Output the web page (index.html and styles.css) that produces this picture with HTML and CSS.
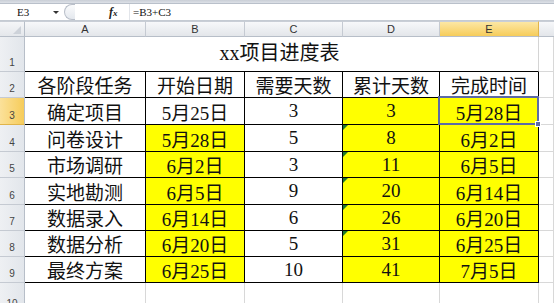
FILE: index.html
```html
<!DOCTYPE html>
<html>
<head>
<meta charset="utf-8">
<link rel="stylesheet" href="styles.css">
</head>
<body>
<div class="app">
  <div class="topstrip"></div>
  <div class="fbar">
    <div class="namebox"><span class="ref">E3</span><span class="arrow"></span></div>
    <div class="knob"></div>
    <div class="fx">f<span>x</span></div>
    <div class="formula">=B3+C3</div>
  </div>
  <div class="sheet">
    <div class="corner"><span class="tri"></span></div>
    <div class="ch">A</div>
    <div class="ch">B</div>
    <div class="ch">C</div>
    <div class="ch">D</div>
    <div class="ch sel">E</div>
    <div class="ch rest"></div>

    <div class="rh">1</div>
    <div class="title">xx项目进度表</div>
    <div class="c"></div>

    <div class="rh">2</div>
    <div class="c b">各阶段任务</div>
    <div class="c b">开始日期</div>
    <div class="c b">需要天数</div>
    <div class="c b">累计天数</div>
    <div class="c b">完成时间</div>
    <div class="c"></div>

    <div class="rh sel">3</div>
    <div class="c b">确定项目</div>
    <div class="c b">5月25日</div>
    <div class="c b">3</div>
    <div class="c b y">3</div>
    <div class="c b y active">5月28日</div>
    <div class="c"></div>

    <div class="rh">4</div>
    <div class="c b">问卷设计</div>
    <div class="c b y">5月28日</div>
    <div class="c b">5</div>
    <div class="c b y g">8</div>
    <div class="c b y">6月2日</div>
    <div class="c"></div>

    <div class="rh">5</div>
    <div class="c b">市场调研</div>
    <div class="c b y">6月2日</div>
    <div class="c b">3</div>
    <div class="c b y g">11</div>
    <div class="c b y">6月5日</div>
    <div class="c"></div>

    <div class="rh">6</div>
    <div class="c b">实地勘测</div>
    <div class="c b y">6月5日</div>
    <div class="c b">9</div>
    <div class="c b y g">20</div>
    <div class="c b y">6月14日</div>
    <div class="c"></div>

    <div class="rh">7</div>
    <div class="c b">数据录入</div>
    <div class="c b y">6月14日</div>
    <div class="c b">6</div>
    <div class="c b y g">26</div>
    <div class="c b y">6月20日</div>
    <div class="c"></div>

    <div class="rh">8</div>
    <div class="c b">数据分析</div>
    <div class="c b y">6月20日</div>
    <div class="c b">5</div>
    <div class="c b y g">31</div>
    <div class="c b y">6月25日</div>
    <div class="c"></div>

    <div class="rh">9</div>
    <div class="c b">最终方案</div>
    <div class="c b y">6月25日</div>
    <div class="c b">10</div>
    <div class="c b y">41</div>
    <div class="c b y">7月5日</div>
    <div class="c"></div>

    <div class="rh">10</div>
    <div class="c"></div>
    <div class="c"></div>
    <div class="c"></div>
    <div class="c"></div>
    <div class="c"></div>
    <div class="c"></div>
  </div>
</div>
</body>
</html>
```

FILE: styles.css
```css
html, body {
  margin: 0;
  padding: 0;
  background: #fff;
  overflow: hidden;
}
.app {
  width: 554px;
  height: 303px;
  overflow: hidden;
  font-family: "Liberation Serif", "Noto Sans CJK SC", serif;
}
.topstrip {
  height: 3px;
  background: linear-gradient(#c9ced6, #dde1e7);
  border-bottom: 1px solid #b9c0ca;
}
.fbar {
  height: 16px;
  display: flex;
  align-items: center;
  background: #fff;
  border-bottom: 1px solid #c5cbd3;
  font-size: 11px;
  color: #111;
}
.namebox {
  width: 62px;
  display: flex;
  align-items: center;
  position: relative;
}
.ref {
  margin-left: 17px;
  font-family: "Liberation Serif", serif;
  font-size: 11px;
}
.arrow {
  margin-left: 24px;
  width: 0;
  height: 0;
  border-left: 3px solid transparent;
  border-right: 3px solid transparent;
  border-top: 3px solid #333;
}
.knob {
  width: 10px;
  height: 14px;
  border: 1px solid #b8bec8;
  border-right: none;
  border-radius: 8px 0 0 8px;
  background: linear-gradient(#fafbfc, #e4e8ee);
  margin-left: 2px;
}
.fx {
  margin-left: 34px;
  font-family: "Liberation Serif", serif;
  font-style: italic;
  font-weight: bold;
  font-size: 12px;
  color: #222;
  width: 20px;
}
.fx span {
  font-size: 9px;
}
.formula {
  font-family: "Liberation Serif", serif;
  font-size: 11px;
  border-left: 1px solid #e2e5ea;
  padding-left: 3px;
  height: 16px;
  line-height: 16px;
}
.sheet {
  display: grid;
  grid-template-columns: 25px 121px 99px 98px 97px 99px 1fr;
  grid-template-rows: 16px 35px 26px 27px 27px 26px 27px 26px 26px 26px 30px;
}
.corner {
  background: linear-gradient(#f5f6f8, #e4e7eb);
  border-right: 1px solid #b7bec8;
  border-bottom: 1px solid #b7bec8;
  border-top: 1px solid #c9ced6;
  box-sizing: border-box;
  position: relative;
}
.tri {
  position: absolute;
  right: 3px;
  bottom: 2px;
  width: 0;
  height: 0;
  border-left: 8px solid transparent;
  border-bottom: 8px solid #cdd2d9;
}
.ch {
  background: linear-gradient(#f7f8fa, #e3e6ea);
  border-right: 1px solid #c5cad2;
  border-bottom: 1px solid #b7bec8;
  border-top: 1px solid #c9ced6;
  box-sizing: border-box;
  font-family: "Liberation Sans", sans-serif;
  font-size: 11px;
  color: #333;
  display: flex;
  align-items: center;
  justify-content: center;
}
.ch.sel {
  background: linear-gradient(#fce7a4, #f6cc5a);
  border-right-color: #e0b44a;
}
.ch.rest {
  border-right: none;
}
.rh {
  background: linear-gradient(90deg, #eef0f3, #e2e6eb);
  border-right: 1px solid #b7bec8;
  border-bottom: 1px solid #c5cad2;
  box-sizing: border-box;
  font-family: "Liberation Sans", sans-serif;
  font-size: 10px;
  color: #444;
  display: flex;
  align-items: flex-end;
  justify-content: center;
  padding-bottom: 3px;
}
.rh.sel {
  background: linear-gradient(90deg, #fbe19a, #f6cc5a);
  border-bottom-color: #e0b44a;
}
.title {
  grid-column: 2 / 7;
  border-bottom: 1px solid #000;
  border-right: 1px solid #d4d4d4;
  box-sizing: border-box;
  font-size: 20px;
  color: #111;
  display: flex;
  align-items: flex-end;
  justify-content: center;
  padding-bottom: 5px;
  padding-right: 4px;
}
.c {
  border-right: 1px solid #d8d8d8;
  border-bottom: 1px solid #d8d8d8;
  box-sizing: border-box;
  font-size: 19px;
  color: #111;
  display: flex;
  align-items: center;
  justify-content: center;
  position: relative;
  white-space: nowrap;
}
.c.b {
  border-right-color: #000;
  border-bottom-color: #000;
}
.c.y {
  background: #ffff00;
}
.c.g::before {
  content: "";
  position: absolute;
  left: 0;
  top: 0;
  width: 0;
  height: 0;
  border-top: 5px solid #1f7a2a;
  border-right: 5px solid transparent;
}
.c.active::after {
  content: "";
  position: absolute;
  left: -2px;
  top: -2px;
  right: -1px;
  bottom: -1px;
  border: 2px solid #5c6aa6;
  pointer-events: none;
}
.c.active::before {
  content: "";
  position: absolute;
  right: -3px;
  bottom: -3px;
  width: 4px;
  height: 4px;
  background: #5c6aa6;
  border: 1px solid #fff;
  z-index: 2;
}
```
